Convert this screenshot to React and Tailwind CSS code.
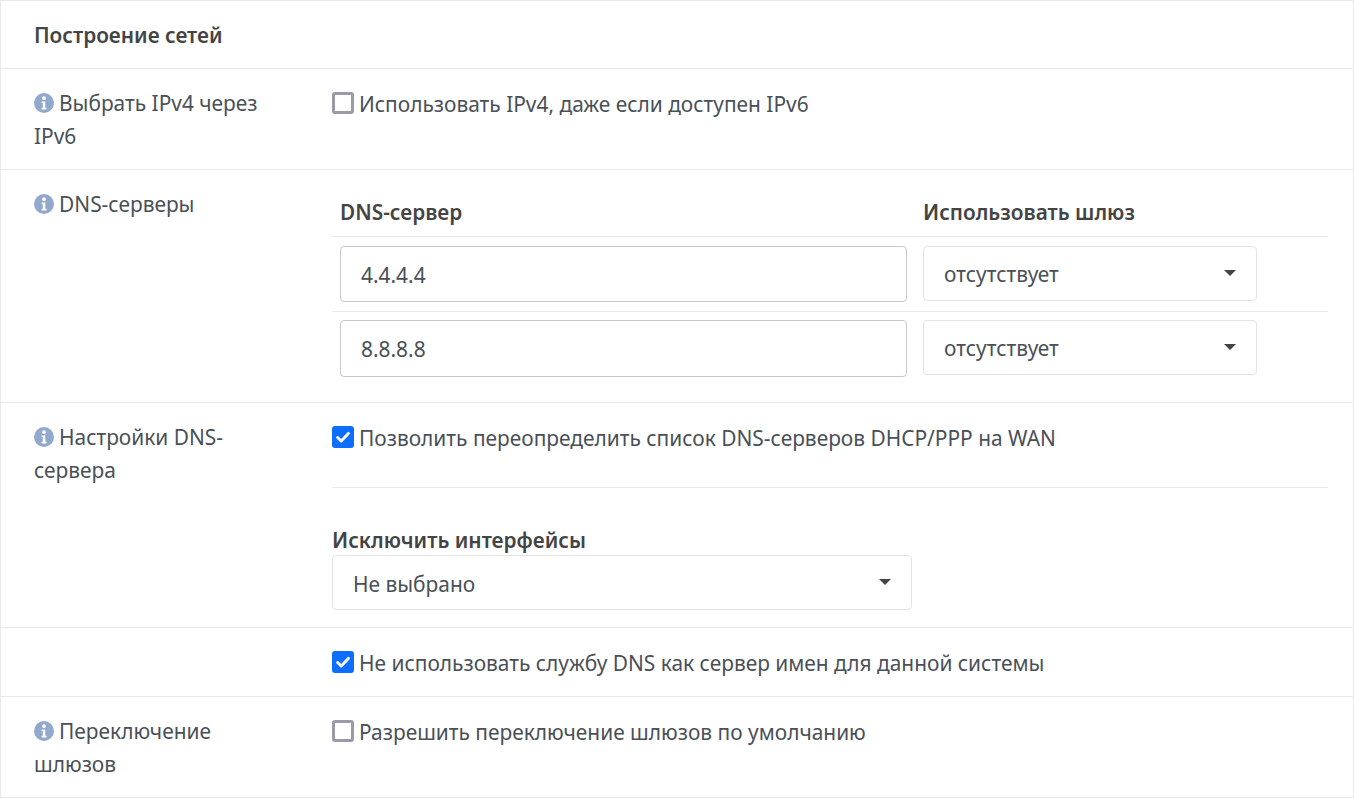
const font = { fontFamily: '"Noto Sans", sans-serif' };

const InfoIcon = () => (
  <svg viewBox="0 0 20 20" className="mr-[5px] inline-block h-5 w-5 align-[-2px]">
    <circle cx="10" cy="10" r="10" fill="#92a8cd" />
    <circle cx="10" cy="5.2" r="1.9" fill="#fff" />
    <path d="M7.6 8.4h3.7v6.4h1.2v1.7H7.6v-1.7h1.2v-4.7H7.6z" fill="#fff" />
  </svg>
);

const Check = ({ checked }) =>
  checked ? (
    <span className="mb-[3px] mr-[5px] inline-flex h-[22px] w-[22px] shrink-0 items-center justify-center rounded-[3px] bg-[#0d6efd]">
      <svg viewBox="0 0 20 20" className="h-[18px] w-[18px]" fill="none" stroke="#fff" strokeWidth="3.2" strokeLinecap="round" strokeLinejoin="round">
        <path d="M4 10.5l4 4 8-8.5" />
      </svg>
    </span>
  ) : (
    <span className="mb-[3px] mr-[5px] h-[22px] w-[22px] shrink-0 rounded-[3px] border-[3px] border-[#9a9aa8] bg-white" />
  );

const CheckRow = ({ checked, children }) => (
  <div className="flex items-center text-[#495057]">
    <Check checked={checked} />
    <span>{children}</span>
  </div>
);

const Select = ({ value, className }) => (
  <div className={`flex items-center justify-between rounded border border-[#e3e3e3] bg-white pl-5 pr-5 pt-[3px] text-[#495057] ${className}`}>
    <span>{value}</span>
    <span className="mb-1 h-0 w-0 border-x-[6px] border-t-[6px] border-x-transparent border-t-[#444]" />
  </div>
);

const Row = ({ label, className, children }) => (
  <div className={`flex border-b border-[#e9e9e9] ${className}`}>
    <div className="w-[331px] shrink-0 pl-[33px] pr-[60px] pt-[18px] leading-[32.5px] text-[#495057]">
      {label && (
        <>
          <InfoIcon />
          {label}
        </>
      )}
    </div>
    <div className="min-w-0 flex-1 pr-[25px]">{children}</div>
  </div>
);

function DnsRow({ value, border }) {
  return (
    <div className={`flex items-start gap-4 px-2 ${border ? 'h-[75px] border-b border-[#e9e9e9] pt-[9px]' : 'h-[65px] pt-[8px]'}`}>
      <div className={`flex w-[567px] items-center rounded border border-[#c8c8c8] pl-5 pt-[3px] text-[#495057] ${border ? 'h-[56px]' : 'h-[57px]'}`}>{value}</div>
      <Select value="отсутствует" className="h-[55px] w-[334px]" />
    </div>
  );
}

export default function App() {
  return (
    <div style={font} className="h-[798px] w-[1354px] overflow-hidden border-x border-t border-[#e9e9e9] bg-white text-[20.9px]">
      <div className="flex h-[68px] items-center border-b border-[#e9e9e9] pl-[33px] pt-[2px] text-[20.8px] font-semibold text-[#444]">
        Построение сетей
      </div>

      <Row label="Выбрать IPv4 через IPv6" className="h-[101px]">
        <div className="pt-[20px]">
          <CheckRow>Использовать IPv4, даже если доступен IPv6</CheckRow>
        </div>
      </Row>

      <Row label="DNS-серверы" className="h-[233px]">
        <div className="pt-[27px]">
          <div className="flex h-[40px] border-b border-[#e9e9e9] text-[20.8px] font-semibold text-[#444]">
            <div className="w-[591px] pl-2">DNS-сервер</div>
            <div>Использовать шлюз</div>
          </div>
          <DnsRow value="4.4.4.4" border />
          <DnsRow value="8.8.8.8" />
        </div>
      </Row>

      <Row label="Настройки DNS-сервера" className="h-[225px]">
        <div className="pt-[20px]">
          <CheckRow checked>Позволить переопределить список DNS-серверов DHCP/PPP на WAN</CheckRow>
          <div className="mt-[33px] border-b border-[#e9e9e9]" />
          <div className="mt-[37px] text-[20.8px] font-semibold leading-[30px] text-[#444]">Исключить интерфейсы</div>
          <Select value="Не выбрано" className="h-[55px] w-[580px]" />
        </div>
      </Row>

      <Row className="h-[69px]">
        <div className="pt-[20px]">
          <CheckRow checked>Не использовать службу DNS как сервер имен для данной системы</CheckRow>
        </div>
      </Row>

      <Row label="Переключение шлюзов" className="h-[101px]">
        <div className="pt-[20px]">
          <CheckRow>Разрешить переключение шлюзов по умолчанию</CheckRow>
        </div>
      </Row>
    </div>
  );
}
